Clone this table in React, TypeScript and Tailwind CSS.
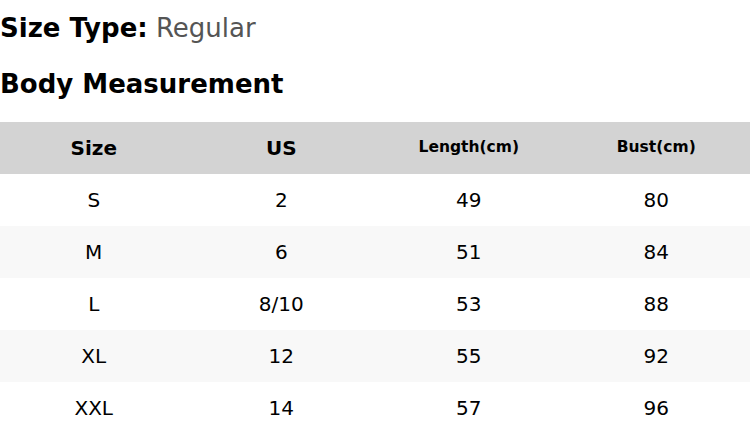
import React from "react";

const rows = [
  ["S", "2", "49", "80"],
  ["M", "6", "51", "84"],
  ["L", "8/10", "53", "88"],
  ["XL", "12", "55", "92"],
  ["XXL", "14", "57", "96"],
];

export default function App() {
  return (
    <div className="w-[750px] h-[434px] overflow-hidden bg-white text-black" style={{ fontFamily: '"DejaVu Sans", Verdana, sans-serif' }}>
      <div className="h-[56px] flex items-center text-[26px] leading-none whitespace-pre">
        <span className="font-bold">Size Type:</span>
        <span className="text-[#555]"> Regular</span>
      </div>
      <div className="h-[56px] flex items-center text-[26px] font-bold leading-none">Body Measurement</div>
      <div className="mt-[10px]">
        <div className="grid grid-cols-4 h-[52px] bg-[#d3d3d3] items-center text-center font-bold">
          <div className="text-[20px]">Size</div>
          <div className="text-[20px]">US</div>
          <div className="text-[15.5px]">Length(cm)</div>
          <div className="text-[15.5px]">Bust(cm)</div>
        </div>
        {rows.map((r, i) => (
          <div key={i} className={`grid grid-cols-4 h-[52px] items-center text-center text-[20px] ${i % 2 === 1 ? "bg-[#f8f8f8]" : "bg-white"}`}>
            {r.map((c, j) => (
              <div key={j}>{c}</div>
            ))}
          </div>
        ))}
      </div>
    </div>
  );
}
